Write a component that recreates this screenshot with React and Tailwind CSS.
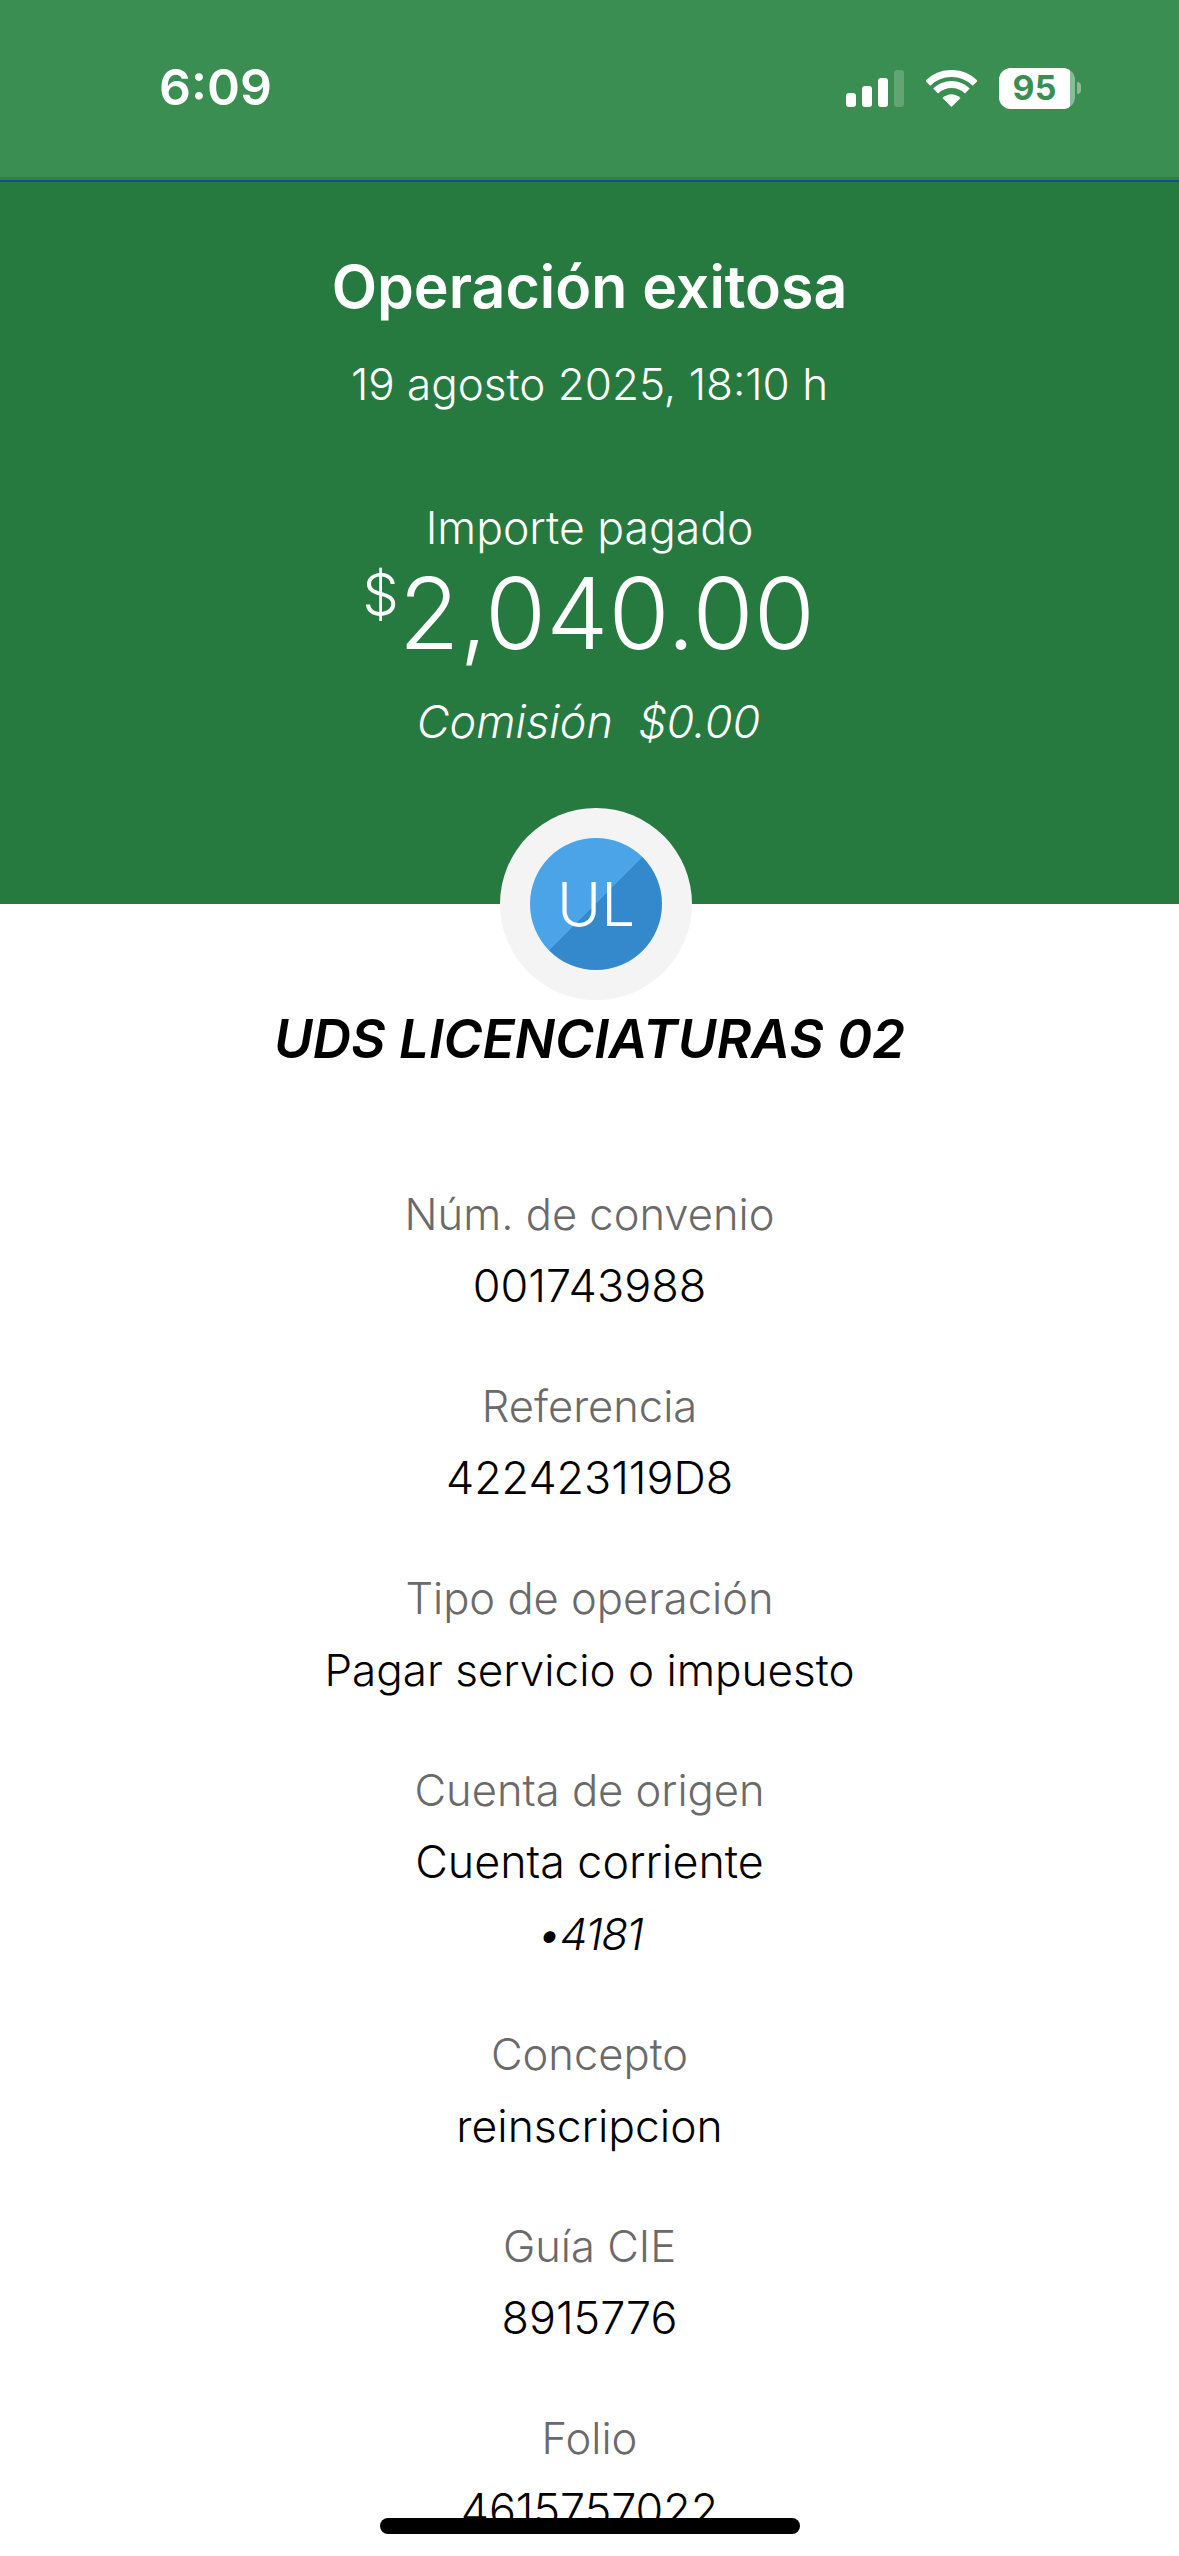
const rows = [
  ["Núm. de convenio", [["001743988", "text-[45px] font-light not-italic"]]],
  ["Referencia", [["422423119D8", "text-[44.8px] font-light not-italic"]]],
  ["Tipo de operación", [["Pagar servicio o impuesto", "text-[44px] font-light not-italic"]]],
  ["Cuenta de origen", [["Cuenta corriente", "text-[44.8px] font-light not-italic"], ["•4181", "text-[44px] font-light italic tracking-[-1.6px]"]]],
  ["Concepto", [["reinscripcion", "text-[44.4px] font-light not-italic"]]],
  ["Guía CIE", [["8915776", "text-[44.8px] font-light not-italic"]]],
  ["Folio", [["4615757022", "text-[44.8px] font-light not-italic"]]],
];

function Signal() {
  return (
    <svg width="58" height="37" viewBox="0 0 58 37" fill="#fff">
      <rect x="0" y="23" width="10" height="14" rx="3" />
      <rect x="16" y="16" width="10" height="21" rx="3" />
      <rect x="32" y="8" width="10" height="29" rx="3" />
      <rect x="48" y="0" width="10" height="37" rx="3" fillOpacity="0.2" />
    </svg>
  );
}

function Wifi() {
  return (
    <svg width="51" height="37" viewBox="0 0 51 37" fill="none" stroke="#fff" strokeWidth="7">
      <path d="M25.5 37 L16.5 28 Q25.5 20.5 34.5 28 Z" fill="#fff" stroke="none" />
      <path d="M9.6 21.1 A22.5 22.5 0 0 1 41.4 21.1" />
      <path d="M1.8 13.3 A33.5 33.5 0 0 1 49.2 13.3" />
    </svg>
  );
}

export default function App() {
  return (
    <div className="relative h-[2556px] w-[1179px] overflow-hidden bg-white font-['Inter',sans-serif] text-center">
      <div className="flex h-[177px] items-center justify-between bg-[#3b8e52] pb-[1px] pl-[159px] pr-[98px]">
        <span className="pb-[2px] text-[50px] font-semibold leading-none text-white">6:09</span>
        <div className="flex items-center gap-[22px]">
          <Signal />
          <Wifi />
          <div className="flex items-center gap-[2px]">
            <div className="flex h-[41px] w-[76px] overflow-hidden rounded-[12px] bg-white/40">
              <div className="flex h-full w-[71px] items-center justify-center rounded-r-[4px] bg-white text-[34px] font-bold leading-none text-[#3b8e52]">
                95
              </div>
            </div>
            <div className="h-[12px] w-[4px] rounded-r-full bg-white/40" />
          </div>
        </div>
      </div>
      <div className="h-[3px] bg-[#2f7f47]" />
      <div className="h-[2px] bg-[#0f4f9e]" />
      <div className="h-[722px] bg-[#277a3f] text-white">
        <div className="pt-[71px] text-[59px] font-semibold leading-[68px]">Operación exitosa</div>
        <div className="mt-[33px] text-[44px] font-light leading-[60px]">19 agosto 2025, 18:10 h</div>
        <div className="mt-[84px] text-[44.5px] font-light leading-[60px]">Importe pagado</div>
        <div className="mt-[5px] flex justify-center pr-[2px] text-[99px] font-light leading-[100px]">
          <span className="mt-[-14px] text-[58px] leading-[90px]">$</span>
          <span>2,040.00</span>
        </div>
        <div className="mt-[29px] pr-[2px] text-[45px] font-light italic leading-[60px]">Comisión&nbsp; $0.00</div>
      </div>
      <div className="flex justify-center pl-[13px]">
        <div className="mt-[-96px] flex h-[192px] w-[192px] items-center justify-center rounded-full bg-[#f4f4f4]">
          <div className="flex h-[132px] w-[132px] items-center justify-center rounded-full bg-[linear-gradient(135deg,#4ba3e8_50%,#3389cc_50%)] text-[60px] font-light leading-none text-white">
            UL
          </div>
        </div>
      </div>
      <div className="mt-[3px] text-[53px] font-semibold italic leading-[72px] text-black">UDS LICENCIATURAS 02</div>
      <div className="mt-[103px] flex flex-col gap-[48px]">
        {rows.map(([label, values]) => (
          <div key={label}>
            <div className="text-[43.5px] font-light leading-[72px] text-[#6a6a6a]">{label}</div>
            {values.map(([v, cls]) => (
              <div key={v} className={"leading-[72px] text-black " + cls}>
                {v}
              </div>
            ))}
          </div>
        ))}
      </div>
      <div className="absolute bottom-[22px] left-[380px] h-[16px] w-[420px] rounded-full bg-black" />
    </div>
  );
}
